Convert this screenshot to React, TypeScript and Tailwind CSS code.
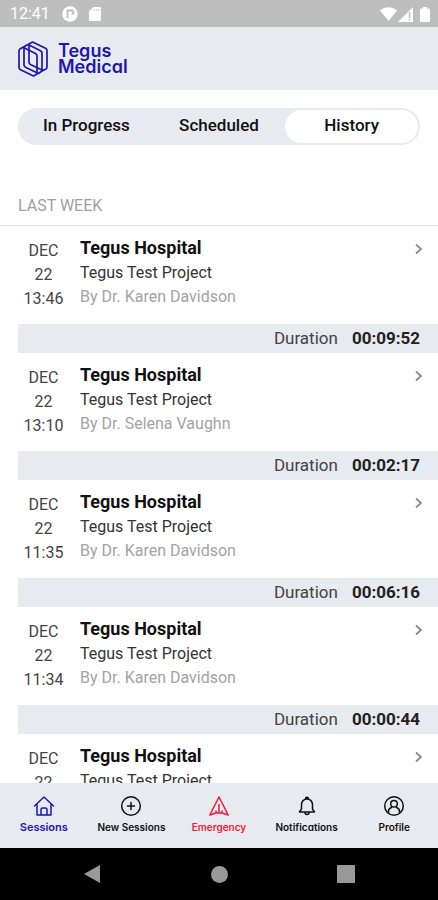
import type { ReactNode } from "react";

const sessions = [
  { time: "13:46", doctor: "Dr. Karen Davidson", duration: "00:09:52" },
  { time: "13:10", doctor: "Dr. Selena Vaughn", duration: "00:02:17" },
  { time: "11:35", doctor: "Dr. Karen Davidson", duration: "00:06:16" },
  { time: "11:34", doctor: "Dr. Karen Davidson", duration: "00:00:44" },
  { time: "11:32", doctor: "Dr. Karen Davidson", duration: "00:01:08" },
];

function StatusBar() {
  return (
    <div className="flex h-[27px] shrink-0 items-center bg-[#bebebe] pt-px pr-2 pl-[10px] text-white">
      <span className="text-base leading-5">12:41</span>
      <svg className="ml-3 size-4" viewBox="0 0 16 16" aria-hidden="true">
        <circle cx="8" cy="8" r="7.7" fill="currentColor" />
        <path d="M5.500 12V4.500H9.500a1.800 1.800 0 0 1 0 3.600" fill="none" stroke="#bebebe" strokeWidth="1.800" />
      </svg>
      <svg className="ml-[11px] h-[14px] w-3" viewBox="0 0 12 14" aria-hidden="true">
        <path d="M4.500 0H11a1 1 0 0 1 1 1v12a1 1 0 0 1-1 1H1a1 1 0 0 1-1-1V4.500Z" fill="currentColor" />
        <path d="M5 2v2M7.200 2v2M9.400 2v2" stroke="#bebebe" strokeWidth="0.800" />
      </svg>
      <svg className="ml-auto h-[14px] w-[17px]" viewBox="0 0 17 14" aria-hidden="true">
        <path d="M0 3.500C5-1 12-1 17 3.500L8.500 14Z" fill="currentColor" />
      </svg>
      <svg className="ml-px size-[15px]" viewBox="0 0 15 15" aria-hidden="true">
        <path d="M0 15 15 0v15Z" fill="currentColor" />
        <path d="M11.500 5v6M11.500 12v1.500" stroke="#bebebe" strokeWidth="1.500" />
      </svg>
      <svg className="ml-[7px] h-[15px] w-[10px]" viewBox="0 0 10 15" aria-hidden="true">
        <path d="M3 0h4v1.500h2a1 1 0 0 1 1 1V14a1 1 0 0 1-1 1H1a1 1 0 0 1-1-1V2.500a1 1 0 0 1 1-1h2Z" fill="currentColor" />
      </svg>
    </div>
  );
}

function Header() {
  return (
    <header className="flex h-[63px] shrink-0 items-center gap-[10px] bg-[#e7eaef] px-[18px] text-[#1d16b4]">
      <svg className="h-9 w-[30px]" viewBox="0 0 30 36" fill="none" stroke="currentColor" strokeWidth="1.700" strokeLinejoin="round" aria-hidden="true">
        <path d="M14.500 1 27.500 7.300Q29 8 29 9.500V26Q29 27.300 28 28L25 29.600 12.500 23.500Q11 22.700 11 21V3Z" />
        <path d="M5 6.200 17.500 12.500Q19 13.300 19 15V33L15.500 35 2.500 28.700Q1 28 1 26.500V10Q1 8.700 2 8Z" />
        <path d="M10 3.500 22.500 9.800Q24 10.600 24 12.300V30L20.500 32.500 7.500 26.200Q6 25.400 6 23.800V5.800Z" />
      </svg>
      <h1 className="font-['Inter',sans-serif] text-[18px] leading-4 font-semibold [font-feature-settings:'cv11']">
        Tegus
        <br />
        Medical
      </h1>
    </header>
  );
}

function Tabs() {
  return (
    <div role="tablist" className="mx-[18px] mt-[18px] flex h-[37px] rounded-full bg-[#e7eaef] p-[2px] text-[17px] font-medium text-[#111]">
      <button role="tab" aria-selected="false" className="flex-1 rounded-full pb-[2px]">In Progress</button>
      <button role="tab" aria-selected="false" className="flex-1 rounded-full pb-[2px]">Scheduled</button>
      <button role="tab" aria-selected="true" className="flex-1 rounded-full bg-white pb-[2px]">History</button>
    </div>
  );
}

function SessionRow({ time, doctor, duration }: { time: string; doctor: string; duration: string }) {
  return (
    <li className="pl-[18px]">
      <div className="flex h-[98px] pt-[10px]">
        <div className="mt-[3px] w-[51px] text-center text-base leading-6 text-[#444]">
          DEC
          <br />
          22
          <br />
          {time}
        </div>
        <div className="ml-[11px] flex-1 text-base leading-6">
          <h3 className="mb-px text-[18px] leading-6 font-bold text-[#111]">Tegus Hospital</h3>
          <p className="text-[#333]">Tegus Test Project</p>
          <p className="text-[#a3a3a3]">By {doctor}</p>
        </div>
        <button aria-label="Open session" className="mr-[14px] flex h-[26px] w-[10px] items-center justify-center text-[#888]">
          <svg className="h-3 w-2" viewBox="0 0 8 12" fill="none" stroke="currentColor" strokeWidth="1.700" aria-hidden="true">
            <path d="m1 1.500 5 4.500-5 4.500" />
          </svg>
        </button>
      </div>
      <div className="flex h-[29px] items-center justify-end gap-[14px] bg-[#e7eaef] pr-[18px] text-[17px] text-[#444]">
        <span>Duration</span>
        <span className="font-bold text-[#222]">{duration}</span>
      </div>
    </li>
  );
}

function NavItem({ label, className, children }: { label: string; className: string; children: ReactNode }) {
  return (
    <a href="#" className={`flex flex-1 flex-col items-center pt-3 ${className}`}>
      <svg className="size-[22px]" viewBox="0 0 22 22" fill="none" stroke="currentColor" strokeWidth="1.500" strokeLinejoin="round" strokeLinecap="round" aria-hidden="true">
        {children}
      </svg>
      <span className="leading-5 font-semibold whitespace-nowrap">{label}</span>
    </a>
  );
}

function BottomNav() {
  return (
    <nav className="flex h-[65px] shrink-0 bg-[#e7eaef] font-['Inter',sans-serif] text-[10px] text-[#111] [font-feature-settings:'cv11']">
      <NavItem label="Sessions" className="text-[11px] text-[#1d16b4]">
        <path d="M1.500 11 11 2l9.500 9M4 9v11h14V9M8 20v-5.500a1.500 1.500 0 0 1 1.500-1.500h3a1.500 1.500 0 0 1 1.500 1.500V20" />
      </NavItem>
      <NavItem label="New Sessions" className="">
        <circle cx="11" cy="11" r="9.300" />
        <path d="M11 7.500v7M7.500 11h7" />
      </NavItem>
      <NavItem label="Emergency" className="text-[#f5163b]">
        <path d="M11 2 1.800 20 8 18V16M11 2l9.200 18L14 18V16M8 18h6M11 9.500V18" />
      </NavItem>
      <NavItem label="Notifications" className="">
        <path d="M3.500 17 5.500 14V9.500a5.500 5.500 0 0 1 11 0V14l2 3ZM9.500 3.800a1.500 1.500 0 0 1 3 0M9 17.500a2 2 0 0 0 4 0" />
      </NavItem>
      <NavItem label="Profile" className="">
        <circle cx="11" cy="11" r="9.300" />
        <circle cx="11" cy="8.800" r="3.300" />
        <path d="M5.500 18v-1.500a4 4 0 0 1 3-4M16.500 18v-1.500a4 4 0 0 0-3-4" />
      </NavItem>
    </nav>
  );
}

function SystemBar() {
  return (
    <div className="flex h-[52px] shrink-0 items-center justify-between bg-black px-[83px] text-[#999]">
      <button aria-label="Back">
        <svg className="size-[18px]" viewBox="0 0 18 18" fill="currentColor" aria-hidden="true">
          <path d="M1 9 17 0v18Z" />
        </svg>
      </button>
      <button aria-label="Home" className="size-[17px] rounded-full bg-[#999]" />
      <button aria-label="Recent apps" className="size-[18px] rounded-[1px] bg-[#999]" />
    </div>
  );
}

export default function App() {
  return (
    <div className="flex h-screen flex-col overflow-hidden bg-white font-['Roboto',sans-serif]">
      <StatusBar />
      <Header />
      <main className="min-h-0 flex-1 overflow-hidden">
        <Tabs />
        <h2 className="mt-[49px] border-b border-[#e4e4e4] px-[18px] pb-[7px] text-base leading-6 text-[#a0a0a0]">LAST WEEK</h2>
        <ul>
          {sessions.map((session) => (
            <SessionRow key={session.time} {...session} />
          ))}
        </ul>
      </main>
      <BottomNav />
      <SystemBar />
    </div>
  );
}
